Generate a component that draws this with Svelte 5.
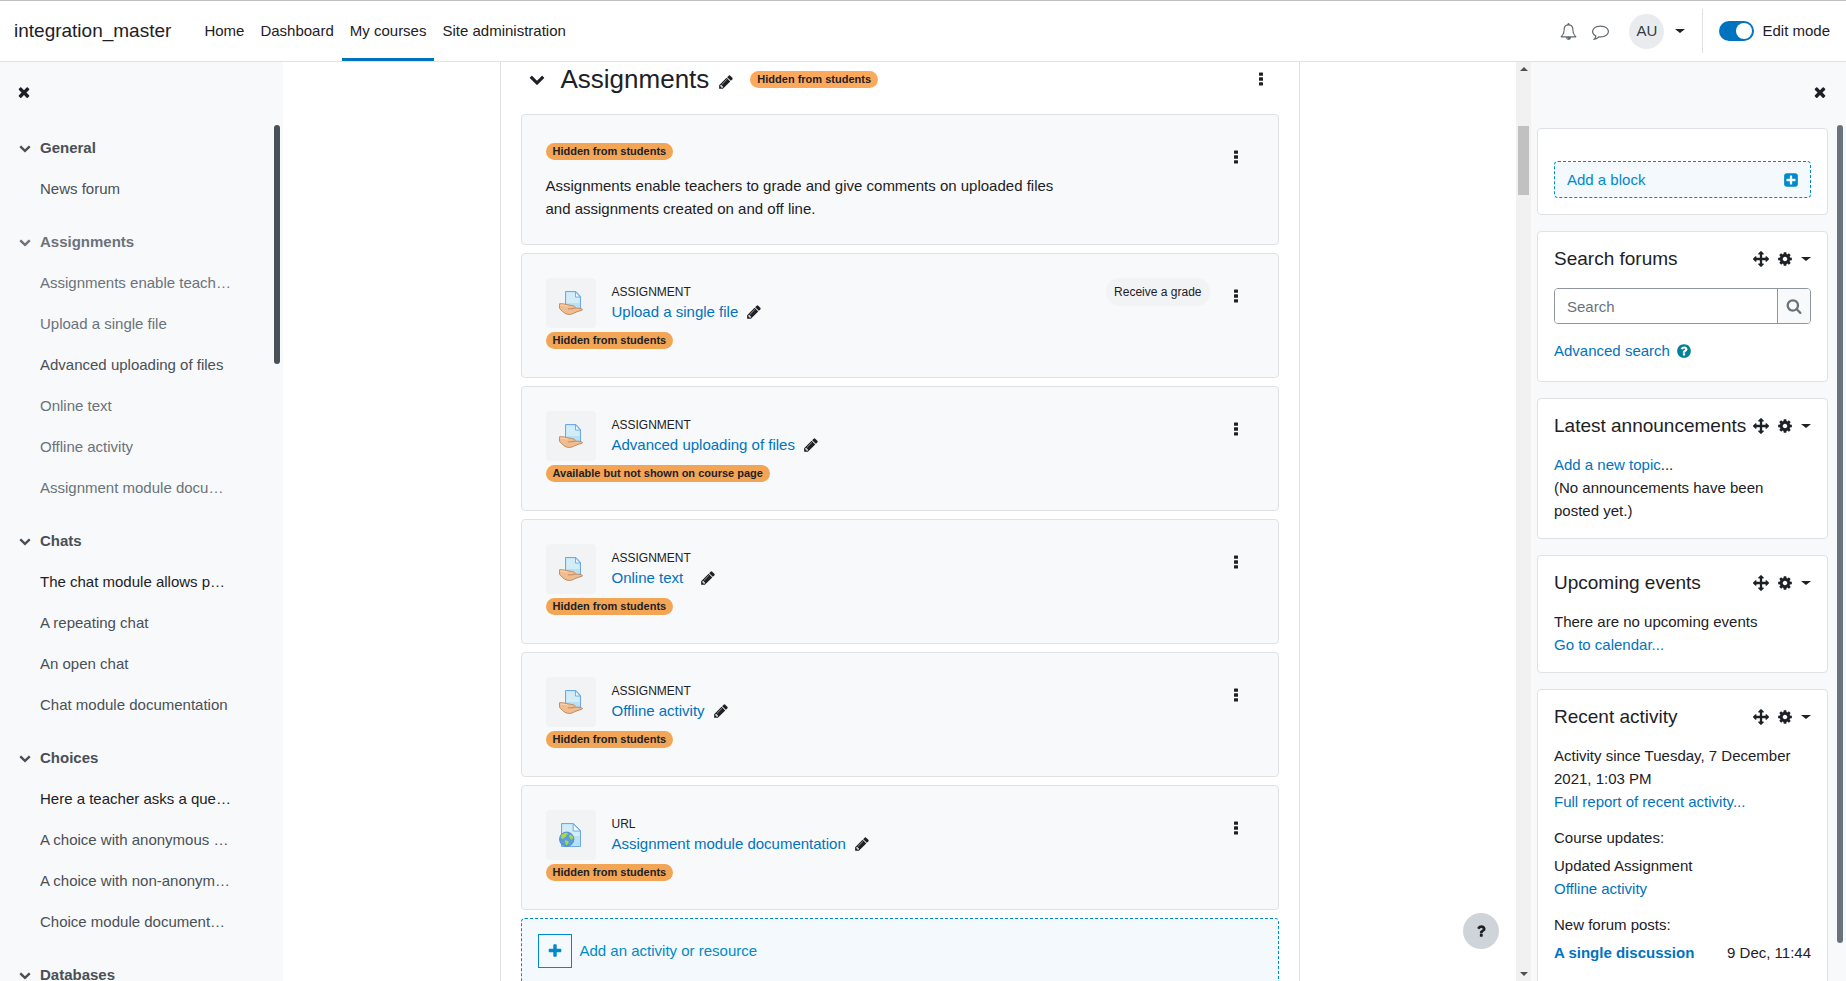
<script lang="ts">
    type Tone = 'normal' | 'dimmed' | 'strong'
    type IndexItem = { title: string; tone?: Tone }
    type IndexSection = { title: string; dimmed?: boolean; items: IndexItem[] }
    type Activity = {
        id: number
        type: string
        title: string
        icon: 'assign' | 'url'
        badge: string
        grade?: boolean
    }

    const icons = {
        bell: 'M912 1696q0-16-16-16-59 0-101.5-42.5t-42.5-101.5q0-16-16-16t-16 16q0 73 51.5 124.5t124.5 51.5q16 0 16-16zm-666-288h1300q-266-300-266-832 0-51-24-105t-69-103-121.5-80.5-169.5-31.5-169.5 31.5-121.5 80.5-69 103-24 105q0 532-266 832zm1482 0q0 52-38 90t-90 38h-448q0 106-75 181t-181 75-181-75-75-181h-448q-52 0-90-38t-38-90q50-42 91-88t85-119.5 74.5-158.5 50-206 19.5-260q0-152 117-282.5t307-158.5q-8-19-8-39 0-40 28-68t68-28 68 28 28 68q0 20-8 39 190 28 307 158.5t117 282.5q0 139 19.5 260t50 206 74.5 158.5 85 119.5 91 88z',
        comment: 'M896 384q-204 0-381.5 69.5t-282 187.5-104.5 255q0 112 71.5 213.5t201.5 175.5l87 50-27 96q-24 91-70 172 152-63 275-171l43-38 57 6q69 8 130 8 204 0 381.5-69.5t282-187.5 104.5-255-104.5-255-282-187.5-381.5-69.5zm896 512q0 174-120 321.5t-326 233-450 85.5q-70 0-145-8-198 175-460 242-49 14-114 22h-5q-15 0-27-10.5t-16-27.5v-1q-3-4-.5-12t2-10 4.5-9.5l6-9 7-8.5 8-9q7-8 31-34.5t34.5-38 31-39.5 32.5-51 27-59 26-76q-157-89-247.5-220t-90.5-281q0-130 71-248.5t191-204.5 286-136.5 348-50.5 348 50.5 286 136.5 191 204.5 71 248.5z',
        times: 'M1490 1322q0 40-28 68l-136 136q-28 28-68 28t-68-28l-294-294-294 294q-28 28-68 28t-68-28l-136-136q-28-28-28-68t28-68l294-294-294-294q-28-28-28-68t28-68l136-136q28-28 68-28t68 28l294 294 294-294q28-28 68-28t68 28l136 136q28 28 28 68t-28 68l-294 294 294 294q28 28 28 68z',
        chevron: 'M1683 808l-742 741q-19 19-45 19t-45-19l-742-741q-19-19-19-45.5t19-45.5l166-165q19-19 45-19t45 19l531 531 531-531q19-19 45-19t45 19l166 165q19 19 19 45.5t-19 45.5z',
        pencil: 'M491 1536l91-91-235-235-91 91v107h128v128h107zm523-928q0-22-22-22-10 0-17 7l-542 542q-7 7-7 17 0 22 22 22 10 0 17-7l542-542q7-7 7-17zm-54-192l416 416-832 832h-416v-416zm683 96q0 53-37 90l-166 166-416-416 166-165q36-38 90-38 53 0 91 38l235 234q37 39 37 91z',
        kebab: 'M672 224q0-64 64-64h320q64 0 64 64v256q0 64-64 64h-320q-64 0-64-64zM672 768q0-64 64-64h320q64 0 64 64v256q0 64-64 64h-320q-64 0-64-64zM672 1312q0-64 64-64h320q64 0 64 64v256q0 64-64 64h-320q-64 0-64-64z',
        arrows: 'M1792 896q0 26-19 45l-256 256q-19 19-45 19t-45-19-19-45v-128h-384v384h128q26 0 45 19t19 45-19 45l-256 256q-19 19-45 19t-45-19l-256-256q-19-19-19-45t19-45 45-19h128v-384h-384v128q0 26-19 45t-45 19-45-19l-256-256q-19-19-19-45t19-45l256-256q19-19 45-19t45 19 19 45v128h384v-384h-128q-26 0-45-19t-19-45 19-45l256-256q19-19 45-19t45 19l256 256q19 19 19 45t-19 45-45 19h-128v384h384v-128q0-26 19-45t45-19 45 19l256 256q19 19 19 45z',
        cog: 'M1152 896q0-106-75-181t-181-75-181 75-75 181 75 181 181 75 181-75 75-181zm512-109v222q0 12-8 23t-20 13l-185 28q-19 54-39 91 35 50 107 138 10 12 10 25t-9 23q-27 37-99 108t-94 71q-12 0-26-9l-138-108q-44 23-91 38-16 136-29 186-7 28-36 28h-222q-14 0-24.5-8.5t-11.5-21.5l-28-184q-49-16-90-37l-141 107q-10 9-25 9-14 0-25-11-126-114-165-168-7-10-7-23 0-12 8-23 15-21 51-66.5t54-70.5q-27-50-41-99l-183-27q-13-2-21-12.5t-8-23.5v-222q0-12 8-23t19-13l186-28q14-46 39-92-40-57-107-138-10-12-10-24 0-10 9-23 26-36 98.5-107.5t94.5-71.5q13 0 26 10l138 107q44-23 91-38 16-136 29-186 7-28 36-28h222q14 0 24.5 8.5t11.5 21.5l28 184q49 16 90 37l142-107q9-9 24-9 13 0 25 10 129 119 165 170 7 8 7 22 0 12-8 23-15 21-51 66.5t-54 70.5q26 50 41 98l183 28q13 2 21 12.5t8 23.5z',
        search: 'M1216 832q0-185-131.5-316.5t-316.5-131.5-316.5 131.5-131.5 316.5 131.5 316.5 316.5 131.5 316.5-131.5 131.5-316.5zm512 832q0 52-38 90t-90 38q-54 0-90-38l-343-342q-179 124-399 124-143 0-273.5-55.5t-225-150-150-225-55.5-273.5 55.5-273.5 150-225 225-150 273.5-55.5 273.5 55.5 225 150 150 225 55.5 273.5q0 220-124 399l343 343q37 37 37 90z',
        plusSquare: 'M1408 960v-128q0-26-19-45t-45-19h-320v-320q0-26-19-45t-45-19h-128q-26 0-45 19t-19 45v320h-320q-26 0-45 19t-19 45v128q0 26 19 45t45 19h320v320q0 26 19 45t45 19h128q26 0 45-19t19-45v-320h320q26 0 45-19t19-45zm256-544v960q0 119-84.5 203.5t-203.5 84.5h-960q-119 0-203.5-84.5t-84.5-203.5v-960q0-119 84.5-203.5t203.5-84.5h960q119 0 203.5 84.5t84.5 203.5z',
        plus: 'M1600 736v192q0 40-28 68t-68 28h-416v416q0 40-28 68t-68 28h-192q-40 0-68-28t-28-68v-416h-416q-40 0-68-28t-28-68v-192q0-40 28-68t68-28h416v-416q0-40 28-68t68-28h192q40 0 68 28t28 68v416h416q40 0 68 28t28 68z',
        questionCircle: 'M1024 1376v-192q0-14-9-23t-23-9h-192q-14 0-23 9t-9 23v192q0 14 9 23t23 9h192q14 0 23-9t9-23zm256-672q0-88-55.5-163t-138.5-116-170-41q-243 0-371 213-15 24 8 42l132 100q7 6 19 6 16 0 25-12 53-68 86-92 34-24 86-24 48 0 85.5 26t37.5 59q0 38-20 61t-68 45q-63 28-115.5 86.5t-52.5 125.5v36q0 14 9 23t23 9h192q14 0 23-9t9-23q0-19 21.5-49.5t54.5-49.5q32-18 49-28.5t46-35 44.5-48 28-60.5 12.5-81zm384 192q0 209-103 385.5t-279.5 279.5-385.5 103-385.5-103-279.5-279.5-103-385.5 103-385.5 279.5-279.5 385.5-103 385.5 103 279.5 279.5 103 385.5z',
        question: 'M1088 1256v240q0 16-12 28t-28 12h-240q-16 0-28-12t-12-28v-240q0-16 12-28t28-12h240q16 0 28 12t12 28zm316-600q0 54-15.5 101t-35 76.5-55 59.5-57.5 43.5-61 35.5q-41 23-68.5 65t-27.5 67q0 17-12 32.5t-28 15.5h-240q-15 0-25.5-18.5t-10.5-37.5v-45q0-83 65-156.5t143-108.5q59-27 84-56t25-76q0-42-46.5-74t-107.5-32q-65 0-108 29-35 25-107 115-13 16-31 16-12 0-25-8l-164-125q-13-10-15.5-25t5.5-28q160-266 464-266 80 0 161 31t146 83 106 127.5 41 158.5z'
    }

    const navItems = ['Home', 'Dashboard', 'My courses', 'Site administration']
    const activeNav = 'My courses'

    const courseIndex: IndexSection[] = [
        { title: 'General', items: [{ title: 'News forum' }] },
        {
            title: 'Assignments',
            dimmed: true,
            items: [
                { title: 'Assignments enable teach…', tone: 'dimmed' },
                { title: 'Upload a single file', tone: 'dimmed' },
                { title: 'Advanced uploading of files' },
                { title: 'Online text', tone: 'dimmed' },
                { title: 'Offline activity', tone: 'dimmed' },
                { title: 'Assignment module docu…', tone: 'dimmed' }
            ]
        },
        {
            title: 'Chats',
            items: [
                { title: 'The chat module allows p…', tone: 'strong' },
                { title: 'A repeating chat' },
                { title: 'An open chat' },
                { title: 'Chat module documentation' }
            ]
        },
        {
            title: 'Choices',
            items: [
                { title: 'Here a teacher asks a que…', tone: 'strong' },
                { title: 'A choice with anonymous …' },
                { title: 'A choice with non-anonym…' },
                { title: 'Choice module document…' }
            ]
        },
        { title: 'Databases', items: [] }
    ]

    const hidden = 'Hidden from students'
    const activities: Activity[] = [
        { id: 1, type: 'Assignment', title: 'Upload a single file', icon: 'assign', badge: hidden, grade: true },
        {
            id: 2,
            type: 'Assignment',
            title: 'Advanced uploading of files',
            icon: 'assign',
            badge: 'Available but not shown on course page'
        },
        { id: 3, type: 'Assignment', title: 'Online text  ', icon: 'assign', badge: hidden },
        { id: 4, type: 'Assignment', title: 'Offline activity', icon: 'assign', badge: hidden },
        { id: 5, type: 'URL', title: 'Assignment module documentation', icon: 'url', badge: hidden }
    ]

    let editMode = $state(true)
    let query = $state('')
</script>

{#snippet icon(name: keyof typeof icons, size = 16)}
    <svg class="icon" width={size} height={size} viewBox="0 0 1792 1792" aria-hidden="true">
        <path d={icons[name]} />
    </svg>
{/snippet}

{#snippet blockHeader(title: string)}
    <header class="block-header">
        <h3>{title}</h3>
        <div class="block-controls">
            <button aria-label="Move {title} block">{@render icon('arrows')}</button>
            <button class="block-menu" aria-label="{title} block actions">
                {@render icon('cog')}
                <span class="caret"></span>
            </button>
        </div>
    </header>
{/snippet}

{#snippet assignIcon()}
    <svg width="24" height="24" viewBox="0 0 24 24" aria-hidden="true">
        <path d="M6.5 .5H17l4.500 5V19.500H6.500z" fill="#b9e0f4" stroke="#6ea8e6" />
        <path d="M7.500 1.500H16v5h4.500V12H7.500z" fill="#d2ecf8" />
        <path d="M16.500 .8V6h4.800z" fill="#f2faff" stroke="#6ea8e6" stroke-width=".9" />
        <path
            d="M.4 12.800c2-.4 5 .1 7.300.7 2.200.4 5.300 1 7 1.400 1.400.4 1.700 1.500.8 2.200 2.300.2 5-.2 7.400.8 1 .5.600 1.300-.4 1.500-3.500.8-6 2-9 3.400-2 .9-4.300.8-6.300.1C4.500 21.900 2.300 19.300.6 17.500z"
            fill="#efbd8f"
            stroke="#b97b4d"
            stroke-width=".8"
        />
        <path
            d="M1.500 14.200c2.500-.3 5 .4 7 .9M15.300 17.200c-2 .5-4.500.3-6.300.3"
            fill="none"
            stroke="#fbe0c4"
            stroke-width=".8"
        />
        <path d="M15.500 17.100c-1.700.7-4.500.8-6.600.7" fill="none" stroke="#a96d42" stroke-width=".8" />
    </svg>
{/snippet}

{#snippet urlIcon()}
    <svg width="24" height="24" viewBox="0 0 24 24" aria-hidden="true">
        <path d="M2.500 .5H14.500l7 7V23.500H2.500z" fill="#b9e0f4" stroke="#6ea8e6" />
        <path d="M3.500 1.500H13.500v7h7V13H3.500z" fill="#d2ecf8" />
        <path d="M14.200 .8V8h7.100z" fill="#f2faff" stroke="#6ea8e6" stroke-width=".9" />
        <circle cx="7.700" cy="16.200" r="7.200" fill="#5b9be0" stroke="#4a86cc" stroke-width=".8" />
        <path
            d="M2.300 12.500c1.700-2.300 4.200-3.200 6.200-2.600.4 1.500-.4 2.300-1.500 2.700.4 1.300-.8 1.700-1.800 2.200-.3 1.300-2.200 1-3.200 0zM10.500 11.800c2-.3 3.200 1 3.500 3-.1 1.700-1.600 2.300-2.300 1.300-.8-1-2.200-2.700-1.200-4.300zM6 17.300c1.500-.4 3.500.5 3.700 2-.3 1.300-1.400 2.600-2.500 2.900-.4-1.600-1.700-3.200-1.200-4.900z"
            fill="#a9da3c"
        />
    </svg>
{/snippet}

<div class="page">
    <header class="navbar">
        <a class="brand" href="#site">integration_master</a>
        <nav class="primary-nav" aria-label="Site navigation">
            {#each navItems as item}
                <a href="#{item}" class:active={item === activeNav}>{item}</a>
            {/each}
        </nav>
        <div class="user-nav">
            <button class="nav-icon" aria-label="Notifications">{@render icon('bell', 17)}</button>
            <button class="nav-icon" aria-label="Messages">{@render icon('comment', 17)}</button>
            <button class="user-menu" aria-label="User menu">
                <span class="avatar">AU</span>
                <span class="caret"></span>
            </button>
            <label class="edit-mode">
                <input type="checkbox" bind:checked={editMode} />
                Edit mode
            </label>
        </div>
    </header>

    <div class="columns">
        <aside class="drawer drawer-left">
            <div class="drawer-header">
                <button aria-label="Close course index">{@render icon('times')}</button>
            </div>
            <nav class="course-index" aria-label="Course index">
                {#each courseIndex as section (section.title)}
                    <section class="index-section">
                        <div class="index-title" class:dimmed={section.dimmed}>
                            <button aria-label="Collapse {section.title}">{@render icon('chevron', 12)}</button>
                            <a href="#{section.title}">{section.title}</a>
                        </div>
                        <ul>
                            {#each section.items as item (item.title)}
                                <li><a class={item.tone ?? 'normal'} href="#{item.title}">{item.title}</a></li>
                            {/each}
                        </ul>
                    </section>
                {/each}
            </nav>
            <span class="drawer-thumb"></span>
        </aside>

        <main>
            <div class="course">
                <div class="section-header">
                    <button aria-label="Collapse section">{@render icon('chevron')}</button>
                    <h2>Assignments</h2>
                    <button class="rename" aria-label="Edit section name">{@render icon('pencil')}</button>
                    <span class="badge">Hidden from students</span>
                    <button class="kebab" aria-label="Section actions">{@render icon('kebab')}</button>
                </div>

                <article class="card text-card">
                    <div class="card-body">
                        <span class="badge">Hidden from students</span>
                        <p>
                            Assignments enable teachers to grade and give comments on uploaded files and
                            assignments created on and off line.
                        </p>
                    </div>
                    <button class="kebab" aria-label="Label actions">{@render icon('kebab')}</button>
                </article>

                {#each activities as activity (activity.id)}
                    <article class="card">
                        <div class="card-body">
                            <div class="activity">
                                <span class="activity-icon">
                                    {#if activity.icon === 'assign'}
                                        {@render assignIcon()}
                                    {:else}
                                        {@render urlIcon()}
                                    {/if}
                                </span>
                                <div>
                                    <div class="activity-type">{activity.type}</div>
                                    <div class="activity-name">
                                        <a href="#activity-{activity.id}">{activity.title}</a>
                                        <button aria-label="Edit title">{@render icon('pencil')}</button>
                                    </div>
                                </div>
                            </div>
                            <span class="badge">{activity.badge}</span>
                        </div>
                        {#if activity.grade}
                            <span class="grade">Receive a grade</span>
                        {/if}
                        <button class="kebab" aria-label="Activity actions">{@render icon('kebab')}</button>
                    </article>
                {/each}

                <button class="add-activity">
                    <span class="add-icon">{@render icon('plus')}</span>
                    Add an activity or resource
                </button>
            </div>
            <button class="help" aria-label="Help">{@render icon('question')}</button>
        </main>

        <div class="scrollbar" aria-hidden="true">
            <span class="arrow up"></span>
            <span class="thumb"></span>
            <span class="arrow down"></span>
        </div>

        <aside class="drawer drawer-right">
            <div class="drawer-header">
                <button aria-label="Close block drawer">{@render icon('times')}</button>
            </div>
            <div class="blocks">
                <section class="block add-block">
                    <a href="#add-block">Add a block {@render icon('plusSquare')}</a>
                </section>

                <section class="block">
                    {@render blockHeader('Search forums')}
                    <form class="search-form" role="search">
                        <div class="search-group">
                            <input type="text" placeholder="Search" aria-label="Search" bind:value={query} />
                            <button type="button" aria-label="Search forums">{@render icon('search')}</button>
                        </div>
                        <div class="advanced">
                            <a href="#advanced">Advanced search</a>
                            <button type="button" aria-label="Help with Search">
                                {@render icon('questionCircle')}
                            </button>
                        </div>
                    </form>
                </section>

                <section class="block">
                    {@render blockHeader('Latest announcements')}
                    <div><a href="#new-topic">Add a new topic</a>...</div>
                    <div>(No announcements have been posted yet.)</div>
                </section>

                <section class="block">
                    {@render blockHeader('Upcoming events')}
                    <div>There are no upcoming events</div>
                    <div><a href="#calendar">Go to calendar...</a></div>
                </section>

                <section class="block">
                    {@render blockHeader('Recent activity')}
                    <div>Activity since Tuesday, 7 December 2021, 1:03 PM</div>
                    <div><a href="#report">Full report of recent activity...</a></div>
                    <h4>Course updates:</h4>
                    <div>Updated Assignment</div>
                    <div><a href="#offline">Offline activity</a></div>
                    <h4>New forum posts:</h4>
                    <div class="post">
                        <a href="#discussion">A single discussion</a>
                        <time>9 Dec, 11:44</time>
                    </div>
                </section>
            </div>
            <span class="drawer-thumb"></span>
        </aside>
    </div>
</div>

<style>
    :global(body) {
        margin: 0;
    }

    .page {
        display: flex;
        flex-direction: column;
        height: 100vh;
        overflow: hidden;
        background: #fff;
        color: #1d2125;
        font-family: 'Liberation Sans', Arial, sans-serif;
        font-size: 15px;
        line-height: 23px;
    }

    .page :global(*) {
        box-sizing: border-box;
    }

    h2,
    h3,
    h4,
    p,
    ul {
        margin: 0;
        padding: 0;
        font-weight: 400;
    }

    ul {
        list-style: none;
    }

    a {
        color: #0073bf;
        text-decoration: none;
    }

    a:hover {
        text-decoration: underline;
    }

    button {
        display: flex;
        align-items: center;
        padding: 0;
        border: 0;
        background: none;
        color: inherit;
        font: inherit;
        cursor: pointer;
    }

    .icon {
        display: block;
        flex: none;
        fill: currentColor;
    }

    .caret {
        border: 5px solid transparent;
        border-top: 4px solid currentColor;
        border-bottom: 0;
    }

    /* navbar */

    .navbar {
        display: flex;
        flex: none;
        height: 62px;
        padding: 0 16px 0 14px;
        border-top: 1px solid #bfbfbf;
        border-bottom: 1px solid #dee2e6;
        line-height: 22px;
    }

    .brand {
        align-self: center;
        margin-right: 25px;
        color: inherit;
        font-size: 19px;
    }

    .primary-nav {
        display: flex;
    }

    .primary-nav a {
        display: flex;
        align-items: center;
        padding: 2px 8px 0;
        border-bottom: 3px solid transparent;
        color: inherit;
    }

    .primary-nav a.active {
        border-bottom-color: #0073bf;
    }

    .user-nav {
        display: flex;
        align-items: center;
        margin-left: auto;
    }

    .nav-icon {
        margin-right: 15px;
        color: #5f686f;
    }

    .user-menu {
        gap: 11px;
        margin: 0 17px 0 5px;
    }

    .avatar {
        display: flex;
        align-items: center;
        justify-content: center;
        width: 35px;
        height: 35px;
        border-radius: 50%;
        background: #e9ecef;
        color: #343a40;
    }

    .edit-mode {
        display: flex;
        align-items: center;
        gap: 8px;
        height: 44px;
        padding-left: 16px;
        border-left: 1px solid #dee2e6;
    }

    .edit-mode input {
        width: 35px;
        height: 20px;
        margin: 0;
        padding: 2px;
        border-radius: 10px;
        background: #adb5bd;
        appearance: none;
    }

    .edit-mode input::before {
        content: '';
        display: block;
        width: 16px;
        height: 16px;
        border-radius: 50%;
        background: #fff;
    }

    .edit-mode input:checked {
        background: #0073bf;
    }

    .edit-mode input:checked::before {
        margin-left: auto;
    }

    /* drawers */

    .columns {
        display: flex;
        flex: 1;
        min-height: 0;
    }

    .drawer {
        position: relative;
        flex: none;
        overflow: hidden;
        background: #f8f9fa;
    }

    .drawer-left {
        width: 283px;
    }

    .drawer-right {
        width: 315px;
        padding: 0 18px 0 6px;
    }

    .drawer-header {
        display: flex;
        align-items: center;
        height: 60px;
    }

    .drawer-left .drawer-header {
        padding-left: 16px;
    }

    .drawer-right .drawer-header {
        justify-content: flex-end;
    }

    .drawer-thumb {
        position: absolute;
        top: 63px;
        right: 3px;
        width: 6px;
        border-radius: 3px;
    }

    .drawer-left .drawer-thumb {
        height: 26%;
        background: #495057;
    }

    .drawer-right .drawer-thumb {
        bottom: 38px;
        background: #6a737b;
    }

    .course-index {
        padding-top: 6px;
        white-space: nowrap;
    }

    .index-section {
        margin-bottom: 13px;
    }

    .index-title {
        display: flex;
        gap: 9px;
        padding-left: 19px;
        color: #495057;
        font-weight: 700;
        line-height: 40px;
    }

    .index-title a {
        color: inherit;
    }

    .index-title.dimmed,
    li .dimmed {
        color: #6a737b;
    }

    li {
        padding-left: 40px;
        line-height: 41px;
    }

    li .normal {
        color: #495057;
    }

    li .strong {
        color: #1d2125;
    }

    /* course content */

    main {
        position: relative;
        flex: 1;
        min-width: 0;
        overflow: hidden;
    }

    .course {
        display: flex;
        flex-direction: column;
        gap: 8px;
        max-width: 800px;
        margin: 0 auto;
        padding: 0 20px;
        border: 1px solid #dee2e6;
        border-width: 0 1px;
    }

    .section-header {
        display: flex;
        align-items: center;
        height: 34px;
        margin-bottom: 10px;
        padding: 0 10px 0 8px;
    }

    .section-header h2 {
        margin: 0 9px 0 16px;
        font-size: 26px;
        line-height: 34px;
    }

    .section-header .kebab {
        margin-left: auto;
    }

    .rename {
        align-self: flex-end;
        padding-bottom: 6px;
        margin-right: 16px;
    }

    .badge {
        display: inline-block;
        padding: 0 7px;
        border-radius: 9px;
        background: #f3a556;
        font-size: 11px;
        font-weight: 700;
        line-height: 17px;
    }

    .section-header .badge {
        background: #fca95b;
    }

    .card {
        display: flex;
        align-items: flex-start;
        padding: 24px 24px 28px;
        border: 1px solid #dee2e6;
        border-radius: 4px;
        background: #f8f9fa;
    }

    .card .kebab {
        margin: 10px 10px 0 18px;
    }

    .card-body {
        display: flex;
        flex: 1;
        flex-direction: column;
        align-items: flex-start;
        gap: 4px;
    }

    .text-card {
        padding-bottom: 24px;
    }

    .text-card .card-body {
        gap: 14px;
        padding-top: 4px;
    }

    .text-card p {
        max-width: 520px;
    }

    .activity {
        display: flex;
        align-items: center;
        gap: 16px;
    }

    .activity-icon {
        display: flex;
        align-items: center;
        justify-content: center;
        width: 50px;
        height: 50px;
        border-radius: 4px;
        background: #f1f3f5;
    }

    .activity-type {
        font-size: 12px;
        line-height: 18px;
        text-transform: uppercase;
    }

    .activity-name {
        display: flex;
        align-items: center;
        gap: 8px;
        line-height: 22px;
        white-space: pre;
    }

    .grade {
        padding: 0 8px;
        border-radius: 14px;
        background: #f1f3f5;
        font-size: 12px;
        line-height: 28px;
    }

    .add-activity {
        gap: 8px;
        padding: 15px 16px;
        border: 1px dashed #008ac9;
        border-radius: 4px;
        background: #f3f9fc;
        color: #008ac9;
        line-height: 22px;
    }

    .add-icon {
        display: flex;
        align-items: center;
        justify-content: center;
        width: 34px;
        height: 34px;
        border: 1px solid #008ac9;
    }

    .help {
        position: absolute;
        right: 17px;
        bottom: 32px;
        justify-content: center;
        width: 36px;
        height: 36px;
        border-radius: 50%;
        background: #ced4da;
    }

    /* page scrollbar */

    .scrollbar {
        display: flex;
        flex: none;
        flex-direction: column;
        align-items: center;
        width: 15px;
        padding: 5px 0;
        background: #f1f1f1;
    }

    .arrow {
        border: 4px solid transparent;
    }

    .arrow.up {
        border-top: 0;
        border-bottom-color: #505050;
    }

    .arrow.down {
        margin-top: auto;
        border-top-color: #505050;
        border-bottom: 0;
    }

    .thumb {
        width: 11px;
        height: 69px;
        margin-top: 55px;
        background: #c1c1c1;
    }

    /* blocks */

    .blocks {
        display: flex;
        flex-direction: column;
        gap: 16px;
        padding-top: 6px;
    }

    .block {
        padding: 16px;
        border: 1px solid #dee2e6;
        border-radius: 4px;
        background: #fff;
    }

    .add-block {
        padding-top: 32px;
    }

    .add-block a {
        display: flex;
        align-items: center;
        justify-content: space-between;
        height: 37px;
        padding: 0 11px 0 12px;
        border: 1px dashed #008ac9;
        border-radius: 4px;
        background: #f3f9fc;
        color: #008ac9;
        line-height: 22px;
    }

    .block-header {
        display: flex;
        align-items: center;
        justify-content: space-between;
        margin-bottom: 16px;
    }

    .block-header h3 {
        font-size: 19px;
        line-height: 22px;
    }

    .block-controls,
    .block-menu {
        display: flex;
        align-items: center;
        gap: 8px;
    }

    .search-form {
        padding: 2px 0 3px;
    }

    .search-group {
        display: flex;
        height: 36px;
        margin-bottom: 15px;
        border: 1px solid #8f959e;
        border-radius: 4px;
        overflow: hidden;
    }

    .search-group input {
        flex: 1;
        min-width: 0;
        padding: 0 12px;
        border: 0;
        color: inherit;
        font: inherit;
    }

    .search-group input::placeholder {
        color: #6a737b;
    }

    .search-group button {
        padding: 0 8px;
        border-left: 1px solid #8f959e;
        background: #f8f9fa;
        color: #6a737b;
    }

    .advanced {
        display: flex;
        align-items: center;
        gap: 6px;
    }

    .advanced button {
        color: #008196;
    }

    h4 {
        margin: 13px 0 5px;
        font-size: 15px;
    }

    .post {
        display: flex;
        justify-content: space-between;
        padding-bottom: 32px;
    }

    .post a {
        font-weight: 700;
    }
</style>
